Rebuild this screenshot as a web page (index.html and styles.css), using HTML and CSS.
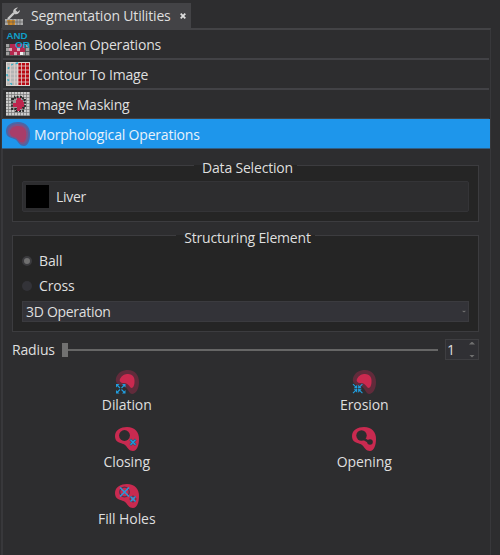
FILE: index.html
```html
<!DOCTYPE html>
<html lang="en">
<head>
<meta charset="utf-8">
<title>Segmentation Utilities</title>
<link rel="stylesheet" href="styles.css">
</head>
<body>
<svg class="defs" width="0" height="0">
  <defs>
    <pattern id="cells" width="4" height="4" patternUnits="userSpaceOnUse"><path d="M0 0H3.2V3.2H0z" fill="#a0a0a0"/></pattern>
    <pattern id="fine" width="3" height="3" patternUnits="userSpaceOnUse"><path d="M0 0H3V3H0z" fill="#777"/><path d="M0 0H2.3V2.3H0z" fill="#ccc"/></pattern>
    <path id="blob" d="M0 9C0 3 6 0 12 0C20 0 24 5 24 12C24 18 22 24 18 24C14 24 13 21 11 19C9 16 6 17 3 15C1 14 0 12 0 9Z"/>
    <g id="halo"><path d="M1 8C3 2 8 0 13 0C20 0 24 5 24 12C24 19 21 24 17 24C13 23 13 17 8 16C3 15 0 13 1 8Z" fill="#612b3b"/><path d="M5 9C7 5 10 4 13 4C18 4 20 8 19.500 12C19.500 16 17.500 19 15.500 17.500C13.500 15 12 13 8.500 13C5.500 13 4 11 5 9Z" fill="#cb294f"/></g>
  </defs>
</svg>
<div class="tab">
  <svg class="tool" viewBox="0 0 18 18" width="18" height="18"><path d="M0 12H18V18H0z" fill="#aaa"/><path d="M2 13H10V18H3z" fill="#d28a27"/><path d="M0 15H18M4 12V18M8 12V18M12 12V18M15 12V18" stroke="#555" stroke-width=".6"/><path d="M3 12L9 6" stroke="#c8c8c8" stroke-width="2.400"/><path d="M13 .5L10.500 3L12.500 5L15 3C15 6 12 8 9.500 7C7 5 8 1 13 .5Z" fill="#c8c8c8"/></svg>
  <span>Segmentation Utilities</span>
  <svg class="close" viewBox="0 0 6 6" width="6" height="6"><path d="M.7 .7L5.300 5.300M5.300 .7L.7 5.300" stroke="#dedede" stroke-width="1.800"/></svg>
</div>
<main class="panel">
  <div class="row">
    <svg viewBox="0 0 24 24" width="24" height="24"><path d="M0 12H24V24H0z" fill="#4a4a4a"/><path d="M0 12H24V24H0z" fill="url(#cells)"/><path d="M4 12H19V20H16V23H4z" fill="#b5284e"/><path d="M3 16H6V19H3zM11 16H14V19H11zM8 20H11V23H8z" fill="#d9a5b5"/><path d="M14 20H17V23H14z" fill="#eee"/><text x="0.500" y="7.300" textLength="21" lengthAdjust="spacingAndGlyphs">AND</text><text x="9" y="15.500" textLength="15" lengthAdjust="spacingAndGlyphs">OR</text></svg>
    <span>Boolean Operations</span>
  </div>
  <div class="row">
    <svg viewBox="0 0 24 24" width="24" height="24"><path d="M0 0H24V24H0z" fill="#d8d3cf"/><path d="M1 1H11V23H1z" fill="#b5b5b5"/><path d="M12 1H23V23H12z" fill="#b90812"/><path d="M4.500 0V24M8.500 0V24M12 0V24M15.500 0V24M19.500 0V24M0 4H24M0 8H24M0 12H24M0 16H24M0 20H24" stroke="#ddd0ce" stroke-width=".8"/><path d="M12 1Q3 2 2 8M1 12Q1 20 7 23" fill="none" stroke="#21aecb" stroke-width="1.300" stroke-dasharray="2 3"/></svg>
    <span>Contour To Image</span>
  </div>
  <div class="row">
    <svg viewBox="0 0 24 24" width="24" height="24"><path d="M0 0H24V24H0z" fill="url(#fine)"/><path d="M6 7H9V5H17V8H19V16H17V19H10V17H6z" fill="#999" stroke="#292929" stroke-width="1.800" stroke-dasharray="2 1.300"/><path d="M11 6H15V8H17V10H18V15H16V17H14V19H11V15H7V11H10V8H11z" fill="#bd244d"/></svg>
    <span>Image Masking</span>
  </div>
  <div class="row active">
    <svg viewBox="0 0 24 24" width="24" height="24"><use href="#blob" fill="#4c65a5"/><use href="#blob" transform="translate(2 2) scale(.84)" fill="#79558a"/><use href="#blob" transform="translate(4 4) scale(.68)" fill="#a83d69"/></svg>
    <span>Morphological Operations</span>
  </div>

  <fieldset class="group data">
    <legend>Data Selection</legend>
    <div class="node"><i class="swatch"></i><span>Liver</span></div>
  </fieldset>

  <fieldset class="group element">
    <legend>Structuring Element</legend>
    <div class="radio"><i class="dot on"></i><span>Ball</span></div>
    <div class="radio"><i class="dot"></i><span>Cross</span></div>
    <div class="select"><span>3D Operation</span><i class="down"></i></div>
  </fieldset>

  <div class="radius">
    <span class="label">Radius</span>
    <div class="slider"><i class="handle"></i><i class="track"></i></div>
    <div class="spin"><span>1</span><div class="arrows"><i class="up"></i><i class="down"></i></div></div>
  </div>

  <div class="actions">
    <div class="action">
      <svg viewBox="0 0 24 24" width="24" height="24"><use href="#halo"/><path d="M1 14H4.500L1 17.500zM10.500 14V17.500L7 14zM1 23.500V20L4.500 23.500zM10.500 23.500H7L10.500 20z" fill="#229ddd"/><path d="M2 15L5 18M9.500 15L6.500 18M2 22.500L5 19.500M9.500 22.500L6.500 19.500" stroke="#229ddd" stroke-width="1.100"/></svg>
      <span>Dilation</span>
    </div>
    <div class="action">
      <svg viewBox="0 0 24 24" width="24" height="24"><use href="#halo"/><path d="M5.200 18.200H1.700L5.200 14.700zM6.200 18.200V14.700L9.700 18.200zM5.200 19.200V22.700L1.700 19.200zM6.200 19.200H9.700L6.200 22.700z" fill="#229ddd"/><path d="M1 14.200L5 18.200M10.400 14.200L6.400 18.200M1 23.200L5 19.200M10.400 23.200L6.400 19.200" stroke="#229ddd" stroke-width="1.100"/></svg>
      <span>Erosion</span>
    </div>
    <div class="action">
      <svg viewBox="0 0 24 24" width="24" height="24"><use href="#blob" fill="#c92a50"/><circle cx="9.500" cy="8.500" r="5.400" fill="#2d2d2f"/><path d="M15.200 12.500L20.800 18M20.800 12.500L15.200 18" stroke="#315372" stroke-width="2.500"/><path d="M15.500 12.800L20.500 17.700M20.500 12.800L15.500 17.700" stroke="#239bdd" stroke-width="1.300"/></svg>
      <span>Closing</span>
    </div>
    <div class="action">
      <svg viewBox="0 0 24 24" width="24" height="24"><use href="#blob" fill="#c92a50"/><circle cx="9.500" cy="8.500" r="5.200" fill="#2d2d2f"/><circle cx="18" cy="15" r="2.800" fill="#2d2d2f"/><path d="M12 12L17 15" stroke="#2d2d2f" stroke-width="2.500"/></svg>
      <span>Opening</span>
    </div>
    <div class="action">
      <svg viewBox="0 0 24 24" width="24" height="24"><use href="#blob" fill="#c92a50"/><circle cx="9.500" cy="8" r="4.800" fill="none" stroke="#4d3450" stroke-width="1.200"/><circle cx="18" cy="15" r="3" fill="none" stroke="#4d3450"/><path d="M5 3.500L14 12.500M14 3.500L5 12.500M15.500 12.500L20.500 17.500M20.500 12.500L15.500 17.500" stroke="#279ada" stroke-width="1.500"/></svg>
      <span>Fill Holes</span>
    </div>
  </div>
</main>
</body>
</html>
```
FILE: styles.css
```css
* { box-sizing: border-box; }
body {
  margin: 0;
  width: 500px;
  height: 555px;
  padding: 3px 9px 0 1px;
  overflow: hidden;
  display: flex;
  flex-direction: column;
  background: #2d2d2f;
  color: #dfdfdf;
  font: 14px/20px "Open Sans", "Noto Sans", sans-serif;
}
svg { display: block; flex: none; overflow: visible; }
span { white-space: nowrap; }
.defs { position: absolute; }

.tab {
  width: 189px;
  height: 25px;
  flex: none;
  margin-left: 1px;
  padding-left: 3px;
  display: flex;
  align-items: center;
  background: #434346;
  letter-spacing: -.17px;
}
.tool { margin-right: 8px; }
.close { margin: 0 5px 0 auto; }

.panel {
  flex: 1;
  border: 2px solid #38383b;
  border-width: 2px 1px 0 2px;
  border-top-color: #434346;
}
.row {
  height: 30px;
  margin-right: 1px;
  padding-left: 3px;
  display: flex;
  align-items: center;
  gap: 4px;
  border-bottom: 2px solid #424246;
  letter-spacing: -.18px;
}
.row span { padding-top: 2px; }
.row text { fill: #109ec8; font: bold 9.5px "Liberation Sans", sans-serif; letter-spacing: 0; }
.row.active {
  margin: -1px 0 0 -1px;
  padding-left: 4px;
  background: #1e96eb;
  border-bottom: 1px solid #315f85;
  color: #e8f2fb;
}

.group {
  margin: 0 11px 0 9px;
  padding: 0 9px;
  border: 1px solid #3c3c3f;
  background: #252525;
  min-width: 0;
}
.group legend {
  height: 14px;
  padding: 0 4px 0 8px;
  margin: 0 auto;
  letter-spacing: -.18px;
}
.data { height: 64px; margin-top: 9px; }
.node {
  height: 31px;
  margin-top: 9px;
  padding-left: 3px;
  display: flex;
  align-items: center;
  gap: 7px;
  background: #2d2d2f;
  border: 1px solid #343437;
  border-radius: 2px;
  letter-spacing: -.3px;
}
.swatch { width: 23px; height: 23px; background: #000; }
.element { height: 104px; margin-top: 6px; padding-top: 6px; }
.radio { height: 25px; display: flex; align-items: center; gap: 7px; letter-spacing: -.15px; }
.dot { width: 10px; height: 10px; border-radius: 50%; background: #333338; }
.dot.on { border: 2px solid #3b3b3e; background: #707070; }
.select {
  height: 21px;
  margin-top: 3px;
  padding: 0 3px;
  display: flex;
  align-items: center;
  justify-content: space-between;
  background: #333338;
  border: 1px solid #3b3b3f;
  letter-spacing: -.3px;
}
.select .down { transform: scale(.75); margin-right: -2px; }

.radius {
  height: 21px;
  margin: 7px 11px 0 9px;
  display: flex;
  align-items: center;
}
.label { width: 50px; letter-spacing: -.15px; }
.slider { flex: 1; display: flex; align-items: center; }
.handle { width: 6px; height: 14px; background: #717171; }
.track { flex: 1; height: 2px; background: #666; }
.spin {
  width: 34px;
  height: 21px;
  margin-left: 7px;
  padding: 0 3px 0 1px;
  display: flex;
  justify-content: space-between;
  align-items: center;
  background: #303034;
  border: 1px solid #3e3e41;
}
.arrows { display: flex; flex-direction: column; gap: 10px; }
.up, .down { width: 6px; height: 3px; background: #707070; }
.up { clip-path: polygon(50% 0, 100% 100%, 0 100%); }
.down { clip-path: polygon(0 0, 100% 0, 50% 100%); }

.actions {
  margin: 10px 7px 0 5px;
  display: grid;
  grid-template-columns: 1fr 1fr;
  grid-auto-rows: 57px;
}
.action { display: flex; flex-direction: column; align-items: center; gap: 1px; letter-spacing: -.08px; }
```
